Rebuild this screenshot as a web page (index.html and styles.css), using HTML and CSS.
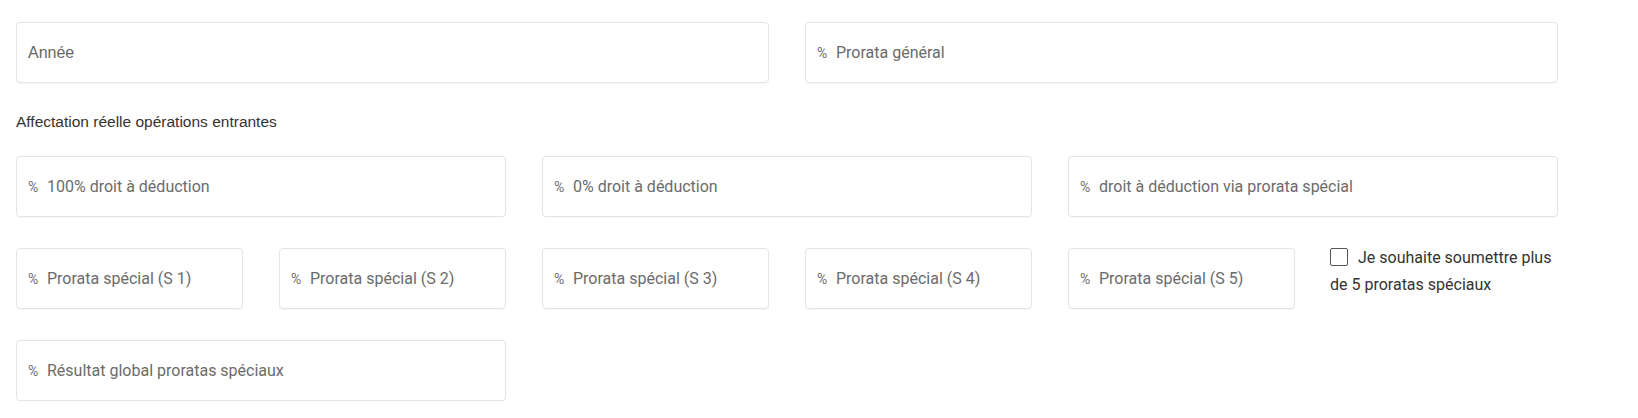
FILE: index.html
```html
<!DOCTYPE html>
<html lang="fr">
<head>
<meta charset="utf-8">
<title>Prorata</title>
<link rel="stylesheet" href="styles.css">
</head>
<body>
<div class="form">
  <div class="grid">
    <div class="field span3"><span class="ph ph-alt">Année</span></div>
    <div class="field span3"><span class="pct">%</span><span class="ph">Prorata général</span></div>
  </div>

  <div class="section-title">Affectation réelle opérations entrantes</div>

  <div class="grid">
    <div class="field span2"><span class="pct">%</span><span class="ph">100% droit à déduction</span></div>
    <div class="field span2"><span class="pct">%</span><span class="ph">0% droit à déduction</span></div>
    <div class="field span2"><span class="pct">%</span><span class="ph">droit à déduction via prorata spécial</span></div>

    <div class="field"><span class="pct">%</span><span class="ph">Prorata spécial (S 1)</span></div>
    <div class="field"><span class="pct">%</span><span class="ph">Prorata spécial (S 2)</span></div>
    <div class="field"><span class="pct">%</span><span class="ph">Prorata spécial (S 3)</span></div>
    <div class="field"><span class="pct">%</span><span class="ph">Prorata spécial (S 4)</span></div>
    <div class="field"><span class="pct">%</span><span class="ph">Prorata spécial (S 5)</span></div>
    <label class="check">
      <span class="box"></span>Je souhaite soumettre plus de 5 proratas spéciaux
    </label>

    <div class="field span2"><span class="pct">%</span><span class="ph">Résultat global proratas spéciaux</span></div>
  </div>
</div>
</body>
</html>
```

FILE: styles.css
```css
html, body {
  margin: 0;
  padding: 0;
  background: #ffffff;
}

.form {
  width: 1542px;
  padding: 22px 0 0 16px;
  font-family: Roboto, "Noto Sans", sans-serif;
}

.grid {
  display: grid;
  grid-template-columns: repeat(6, 1fr);
  column-gap: 36px;
  row-gap: 31px;
}

.field {
  height: 61px;
  box-sizing: border-box;
  border: 1px solid #e4e4e4;
  border-radius: 4px;
  background: #fff;
  display: flex;
  align-items: center;
  padding-left: 11px;
  box-shadow: 0 1px 1px rgba(0, 0, 0, 0.03);
}

.span2 { grid-column: span 2; }
.span3 { grid-column: span 3; }

.pct {
  font-size: 14px;
  color: #6f6f6f;
  width: 19px;
  flex: none;
}

.ph {
  font-size: 16px;
  color: #6b6b6b;
  white-space: nowrap;
}

.ph-alt {
  font-family: "Liberation Sans", Arial, sans-serif;
  font-size: 16px;
  color: #666;
}

.section-title {
  font-family: "Liberation Sans", Arial, sans-serif;
  font-size: 15.5px;
  line-height: 20px;
  color: #333;
  margin: 29px 0 24px;
}

.check {
  font-size: 16px;
  line-height: 27px;
  color: #333;
  margin-top: -4px;
  margin-left: -1px;
  padding-right: 4px;
}

.box {
  display: inline-block;
  width: 18px;
  height: 18px;
  box-sizing: border-box;
  border: 1.5px solid #555;
  border-radius: 2px;
  vertical-align: -3px;
  margin-right: 10px;
}
```
